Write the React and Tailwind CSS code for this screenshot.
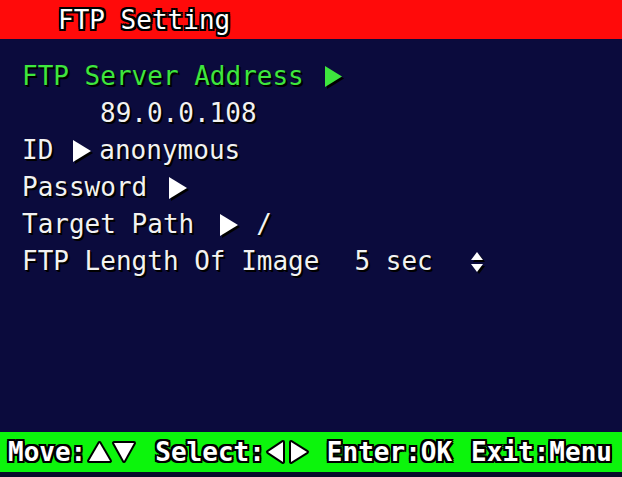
import React from "react";

const mono = "font-['DejaVu_Sans_Mono','Liberation_Mono',monospace]";
const shadow = "[text-shadow:2px_2px_0_#000,1px_1px_0_#000]";
const outline =
  "[text-shadow:-2px_0_0_#000,2px_0_0_#000,0_-2px_0_#000,0_2px_0_#000,2px_2px_0_#000,-2px_-2px_0_#000,2px_-2px_0_#000,-2px_2px_0_#000]";

function Tri({ dir = "right", color = "#fff", w = 18, h = 22, stroke, className = "" }) {
  const pts = {
    right: `0,0 ${w},${h / 2} 0,${h}`,
    left: `${w},0 0,${h / 2} ${w},${h}`,
    up: `${w / 2},0 ${w},${h} 0,${h}`,
    down: `0,0 ${w},0 ${w / 2},${h}`,
  }[dir];
  return (
    <svg
      width={w}
      height={h}
      viewBox={`0 0 ${w} ${h}`}
      style={{ width: w, height: h }}
      className={`shrink-0 overflow-visible ${className}`}
    >
      {stroke && (
        <polygon points={pts} fill={stroke} stroke={stroke} strokeWidth="4" strokeLinejoin="round" />
      )}
      <polygon points={pts} fill={color} />
    </svg>
  );
}

function UpDown() {
  return (
    <svg width="14" height="22" viewBox="0 0 14 22" style={{ width: 14, height: 22 }} className="shrink-0 drop-shadow-[2px_2px_0_#000]">
      <polygon points="7,1 13,9 1,9" fill="#fff" />
      <polygon points="1,13 13,13 7,21" fill="#fff" />
    </svg>
  );
}

function App() {
  return (
    <div className={`w-[622px] h-[477px] flex flex-col bg-[#0b0b3d] ${mono} text-[26px] overflow-hidden`}>
      <div className="h-[39px] bg-[#ff0a0a] flex items-center pl-[58px]">
        <span className={`text-white leading-none ${outline}`}>FTP Setting</span>
      </div>

      <div className={`flex-1 pt-[19px] pl-[22px] text-[#f2f2f2] ${shadow} whitespace-pre`}>
        <div className="h-[37px] flex items-center text-[#3ee63e]">
          <span>FTP Server Address</span>
          <Tri color="#3ee63e" w={17} h={21} className="ml-[21px] drop-shadow-[2px_2px_0_#000]" />
        </div>
        <div className="h-[37px] flex items-center pl-[78px]">89.0.0.108</div>
        <div className="h-[37px] flex items-center">
          <span>ID</span>
          <Tri className="ml-[20px] drop-shadow-[2px_2px_0_#000]" />
          <span className="ml-[8px]">anonymous</span>
        </div>
        <div className="h-[37px] flex items-center">
          <span>Password</span>
          <Tri className="ml-[22px] drop-shadow-[2px_2px_0_#000]" />
        </div>
        <div className="h-[37px] flex items-center">
          <span>Target Path</span>
          <Tri className="ml-[26px] drop-shadow-[2px_2px_0_#000]" />
          <span className="ml-[18px]">/</span>
        </div>
        <div className="h-[37px] flex items-center">
          <span>FTP Length Of Image</span>
          <span className="ml-[35px]">5 sec</span>
          <span className="ml-[37px]"><UpDown /></span>
        </div>
      </div>

      <div className={`h-[40px] bg-[#0cf50c] flex items-center pl-[8px] text-white font-bold leading-none whitespace-pre ${outline}`}>
        <span>Move:</span>
        <Tri dir="up" w={21} h={18} stroke="#000" className="ml-[3px]" />
        <Tri dir="down" w={20} h={18} stroke="#000" className="ml-[4px]" />
        <span className="ml-[21px]">Select:</span>
        <Tri dir="left" w={15} h={20} stroke="#000" className="ml-[3px]" />
        <Tri dir="right" w={16} h={20} stroke="#000" className="ml-[8px]" />
        <span className="ml-[20px]">Enter:OK</span>
        <span className="ml-[19px]">Exit:Menu</span>
      </div>
      <div className="h-[5px] bg-[#0b0b2a]" />
    </div>
  );
}

export default App;
